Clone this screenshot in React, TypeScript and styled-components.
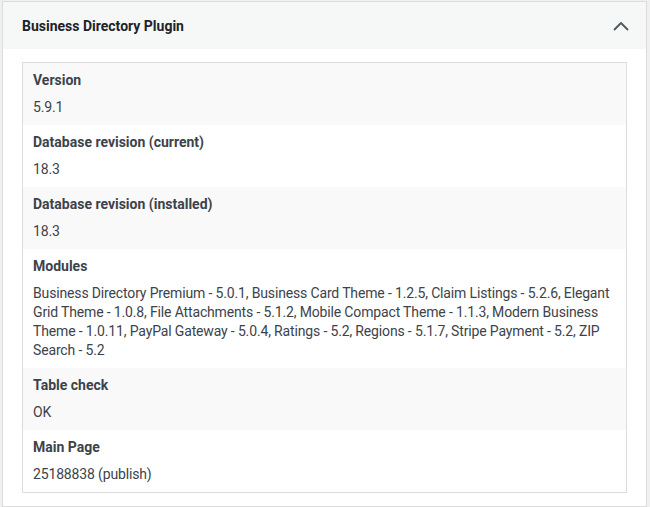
import React from "react";
import styled, { createGlobalStyle } from "styled-components";

const GlobalStyle = createGlobalStyle`
  body {
    margin: 0;
    background: #f0f0f1;
    font-family: Roboto, "Liberation Sans", Arial, sans-serif;
    color: #3c434a;
  }
`;

const Panel = styled.div`
  margin: 1px 3px 0 2px;
  background: #fff;
  border: 1px solid #dcdcde;
  padding-bottom: 13px;
`;

const PanelHeader = styled.div`
  display: flex;
  align-items: center;
  justify-content: space-between;
  height: 47px;
  padding: 0 15px 0 19px;
  background: #f6f7f7;
  box-sizing: border-box;
`;

const PanelTitle = styled.h2`
  margin: 0;
  font-size: 14px;
  font-weight: 700;
  color: #1d2327;
`;

const Toggle = styled.button`
  display: flex;
  align-items: center;
  justify-content: center;
  width: 20px;
  height: 20px;
  padding: 0;
  border: 0;
  background: none;
  cursor: pointer;
`;

const Table = styled.div`
  margin: 13px 19px 0 19px;
  border: 1px solid #dcdcde;
`;

const Row = styled.div<{ $alt?: boolean }>`
  padding: 8px 10px;
  background: ${(p) => (p.$alt ? "#f9f9f9" : "#fff")};
  font-size: 14px;
  line-height: 19px;
`;

const Label = styled.div`
  font-weight: 700;
  margin-bottom: 8px;
`;

const Value = styled.div`
  font-weight: 400;
  letter-spacing: -0.15px;
`;

const rows: { label: string; value: string }[] = [
  { label: "Version", value: "5.9.1" },
  { label: "Database revision (current)", value: "18.3" },
  { label: "Database revision (installed)", value: "18.3" },
  {
    label: "Modules",
    value:
      "Business Directory Premium - 5.0.1, Business Card Theme - 1.2.5, Claim Listings - 5.2.6, Elegant Grid Theme - 1.0.8, File Attachments - 5.1.2, Mobile Compact Theme - 1.1.3, Modern Business Theme - 1.0.11, PayPal Gateway - 5.0.4, Ratings - 5.2, Regions - 5.1.7, Stripe Payment - 5.2, ZIP Search - 5.2",
  },
  { label: "Table check", value: "OK" },
  { label: "Main Page", value: "25188838 (publish)" },
];

function ChevronUp() {
  return (
    <svg width="16" height="10" viewBox="0 0 16 10" fill="none">
      <path
        d="M1.5 8.5 L8 2 L14.5 8.5"
        stroke="#50575e"
        strokeWidth="1.8"
        strokeLinecap="round"
        strokeLinejoin="round"
      />
    </svg>
  );
}

export default function App() {
  return (
    <>
      <GlobalStyle />
      <Panel>
        <PanelHeader>
          <PanelTitle>Business Directory Plugin</PanelTitle>
          <Toggle aria-label="Toggle panel">
            <ChevronUp />
          </Toggle>
        </PanelHeader>
        <Table>
          {rows.map((r, i) => (
            <Row key={r.label} $alt={i % 2 === 0}>
              <Label>{r.label}</Label>
              <Value>{r.value}</Value>
            </Row>
          ))}
        </Table>
      </Panel>
    </>
  );
}
